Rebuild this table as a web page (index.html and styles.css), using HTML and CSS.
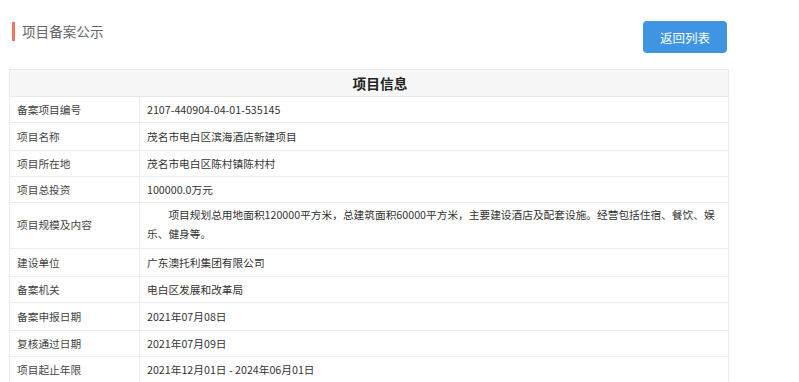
FILE: index.html
```html
<!DOCTYPE html>
<html lang="zh-CN">
<head>
<meta charset="utf-8">
<title>项目备案公示</title>
<link rel="stylesheet" href="styles.css">
</head>
<body>
<div class="page">
  <div class="topbar">
    <h2 class="title"><span class="mark"></span>项目备案公示</h2>
    <a class="btn" href="#">返回列表</a>
  </div>
  <table class="info">
    <thead>
      <tr><th colspan="2">项目信息</th></tr>
    </thead>
    <tbody>
      <tr><td class="k">备案项目编号</td><td class="v">2107-440904-04-01-535145</td></tr>
      <tr class="r28"><td class="k">项目名称</td><td class="v">茂名市电白区滨海酒店新建项目</td></tr>
      <tr><td class="k">项目所在地</td><td class="v">茂名市电白区陈村镇陈村村</td></tr>
      <tr><td class="k">项目总投资</td><td class="v">100000.0万元</td></tr>
      <tr class="tall"><td class="k">项目规模及内容</td><td class="v"><p class="para">项目规划总用地面积120000平方米，总建筑面积60000平方米，主要建设酒店及配套设施。经营包括住宿、餐饮、娱乐、健身等。</p></td></tr>
      <tr class="r28"><td class="k">建设单位</td><td class="v">广东澳托利集团有限公司</td></tr>
      <tr><td class="k">备案机关</td><td class="v">电白区发展和改革局</td></tr>
      <tr class="r28"><td class="k">备案申报日期</td><td class="v">2021年07月08日</td></tr>
      <tr><td class="k">复核通过日期</td><td class="v">2021年07月09日</td></tr>
      <tr><td class="k">项目起止年限</td><td class="v">2021年12月01日 - 2024年06月01日</td></tr>
    </tbody>
  </table>
</div>
</body>
</html>
```
FILE: styles.css
```css
html, body {
  margin: 0;
  padding: 0;
  background: #fff;
}
body {
  font-family: "Noto Sans CJK SC", "Microsoft YaHei", sans-serif;
  color: #333;
}
.page {
  padding: 21px 0 0 9px;
  width: 720px;
}
.topbar {
  display: flex;
  justify-content: space-between;
  align-items: flex-start;
  height: 48px;
}
.title {
  margin: 1px 0 0;
  display: flex;
  align-items: center;
  height: 19px;
  font-size: 13.6px;
  font-weight: normal;
  color: #666;
  line-height: 19px;
}
.mark {
  display: inline-block;
  width: 3px;
  height: 19px;
  margin: 0 7px 0 3px;
  background: #f07567;
}
.btn {
  display: flex;
  align-items: center;
  justify-content: center;
  width: 84px;
  height: 32px;
  margin-right: 2px;
  border-radius: 4px;
  background: #3f95e2;
  color: #fff;
  font-size: 12.5px;
  text-decoration: none;
}
.info {
  width: 720px;
  border-collapse: collapse;
  font-size: 10.7px;
  border: 1px solid #e8e8e8;
}
.info th {
  height: 26px;
  padding: 0 0 0 22px;
  background: #f7f7f7;
  font-size: 13.7px;
  font-weight: bold;
  color: #222;
  border: 1px solid #e8e8e8;
  text-align: center;
}
.info td {
  height: 25px;
  padding: 0 7px;
  border: 1px solid #ececec;
  vertical-align: middle;
  line-height: 19px;
}
.info tr.r28 td {
  height: 27px;
}
.info td.k {
  width: 115px;
  color: #444;
}
.info td.v {
  color: #333;
}
.info tr.tall td {
  height: 42px;
  padding-top: 0;
  padding-bottom: 3px;
}
.para {
  margin: 0;
  text-indent: 2em;
}
```
